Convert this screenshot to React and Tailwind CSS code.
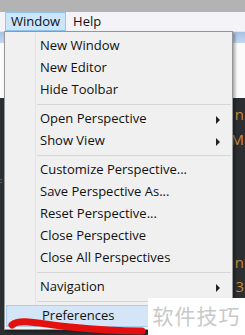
import { useState } from 'react';

const groups = [
  [
    { label: 'New Window' },
    { label: 'New Editor' },
    { label: 'Hide Toolbar' },
  ],
  [
    { label: 'Open Perspective', sub: true },
    { label: 'Show View', sub: true },
  ],
  [
    { label: 'Customize Perspective...' },
    { label: 'Save Perspective As...' },
    { label: 'Reset Perspective...' },
    { label: 'Close Perspective' },
    { label: 'Close All Perspectives' },
  ],
  [{ label: 'Navigation', sub: true }],
  [{ label: 'Preferences', active: true }],
];

const MenuItem = ({ item }) => (
  <div
    className={`relative flex h-[22px] items-center pl-[35px] pr-3 ${
      item.active ? 'mx-[1px] border border-[#a9cdee] bg-[#d3e5f6]' : ''
    }`}
  >
    <span className="text-[13px] text-[#111]">{item.label}</span>
    {item.sub && (
      <span className="absolute right-[12px] top-[8px] h-0 w-0 border-y-[4px] border-l-[4px] border-y-transparent border-l-[#222]" />
    )}
  </div>
);

const App = () => {
  const [open] = useState(true);

  return (
    <div
      className="relative h-[335px] w-[245px] overflow-hidden bg-[#2b2f31]"
      style={{ fontFamily: '"Open Sans", "Noto Sans CJK SC", sans-serif' }}
    >
      {/* window chrome behind the menu */}
      <div className="h-[12px] bg-[#b3b3b3]" />
      <div className="flex h-[20px] items-center border-b border-[#e4e4ea] bg-[#f4f4f8] pl-[5px]">
        <div className="flex h-[19px] items-center border border-[#92c6f0] bg-[#cbe5fa] px-[5px] text-[13px] text-[#111]">
          Window
        </div>
        <div className="px-[7px] text-[13px] text-[#111]">Help</div>
      </div>
      <div className="h-[11px] bg-gradient-to-b from-[#a7c1e6] to-[#c5d7ef]" />
      <div className="h-[55px] bg-[#fbfbfb]" />
      <div className="flex justify-end pr-[1px] pt-[4px] text-[15px] leading-[25px] text-[#d08a3a]">
        <div className="flex flex-col items-end">
          <span>n</span>
          <span>M</span>
        </div>
      </div>
      <div className="absolute right-[1px] top-[250px] flex flex-col items-end text-[15px] leading-[24px] text-[#c8883a]">
        <span>n</span>
        <span>3</span>
      </div>
      <div className="absolute left-0 top-[176px] text-[8px] leading-[8px] text-[#9aa]">:</div>

      {open && (
        <div className="absolute left-[4px] top-[31px] w-[229px] border border-[#979797] bg-[#f0f0f0] pb-[2px] pt-[3px] shadow-[2px_2px_3px_rgba(0,0,0,0.35)]">
          <div className="absolute bottom-0 left-[30px] top-0 w-px bg-[#e2e3e3]" />
          {groups.map((group, gi) => (
            <div key={gi}>
              {gi > 0 && <div className="my-[3px] ml-[32px] mr-[1px] h-px bg-[#d7d7d7]" />}
              {group.map((item) => (
                <MenuItem key={item.label} item={item} />
              ))}
            </div>
          ))}
        </div>
      )}

      {/* watermark */}
      <div className="absolute left-[148px] top-[298px] flex h-[37px] w-[97px] items-center justify-center bg-white text-[21px] tracking-[1px] text-[#c9c9c9]">
        软件技巧
      </div>

      {/* red pen stroke */}
      <svg className="absolute left-0 top-[312px]" width="150" height="23" viewBox="0 0 150 23">
        <path
          d="M12 13 C 20 6, 40 12, 70 15 S 120 19, 142 19"
          stroke="#e3100f"
          strokeWidth="7"
          strokeLinecap="round"
          fill="none"
        />
      </svg>
    </div>
  );
};

export default App;
